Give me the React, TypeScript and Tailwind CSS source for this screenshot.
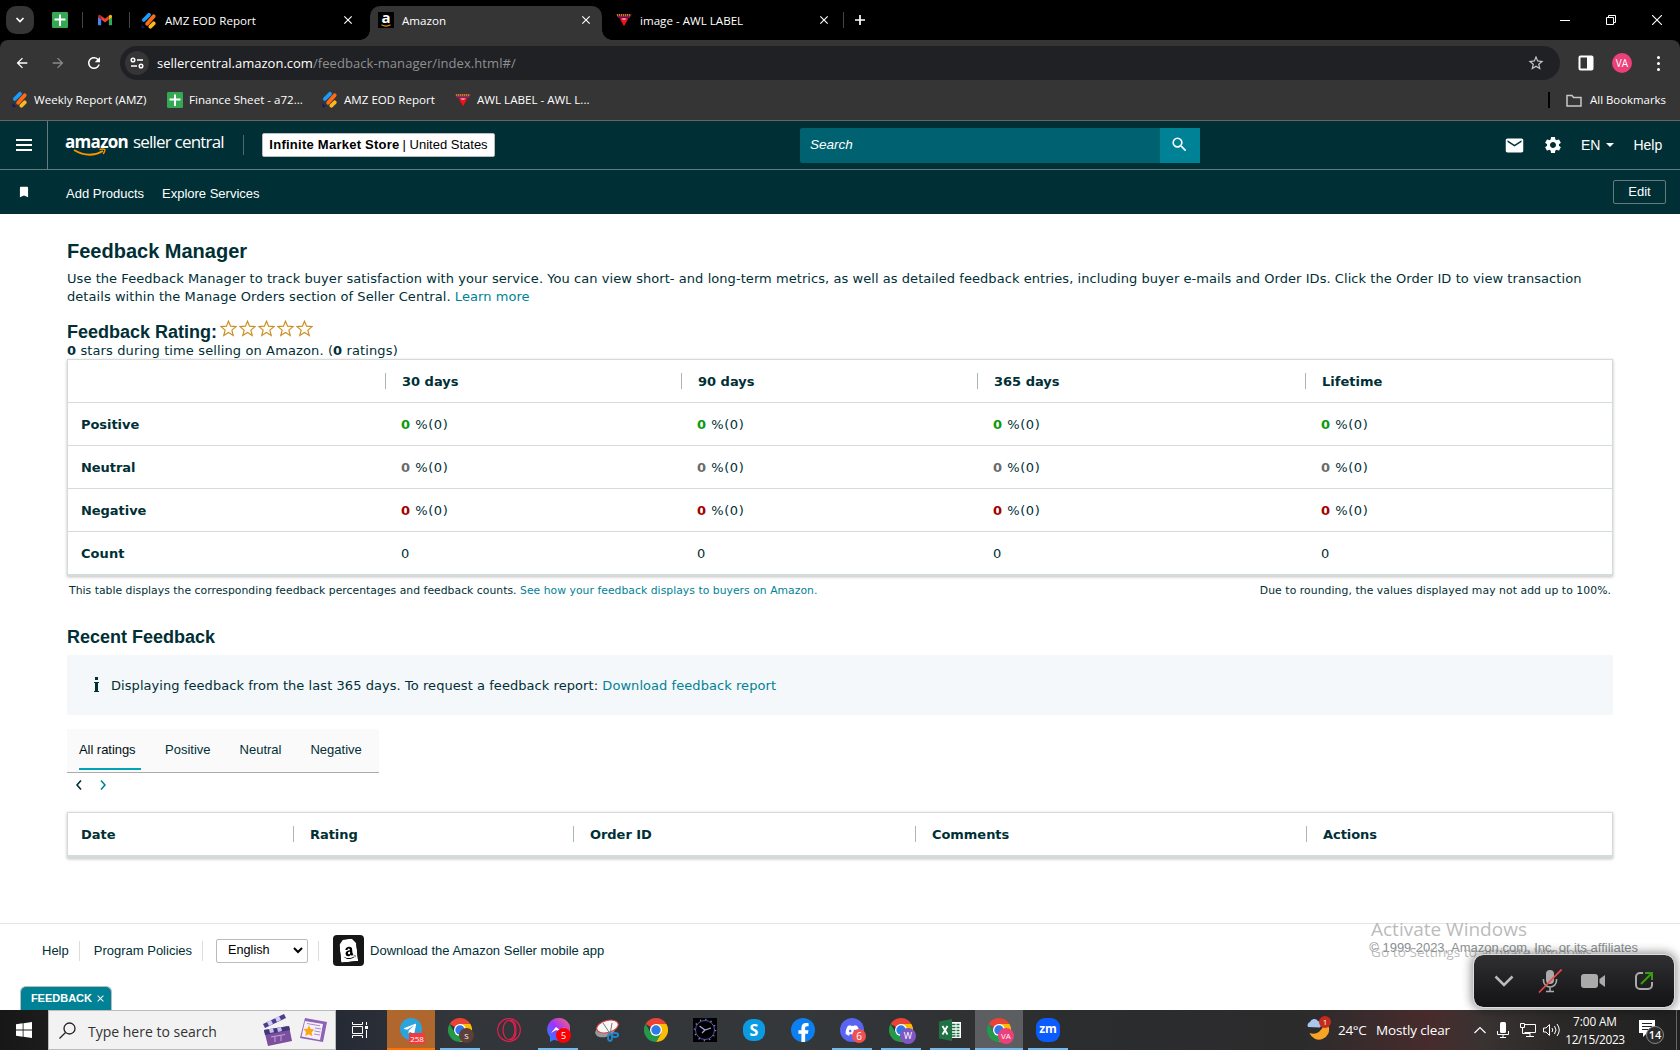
import React from 'react';
import { FaAmazon, FaDiscord, FaFacebookF, FaTelegramPlane } from 'react-icons/fa';
import {
  MdArrowBack,
  MdArrowForward,
  MdBookmark,
  MdClose,
  MdEmail,
  MdRefresh,
  MdSearch,
  MdSettings,
  MdStarBorder,
} from 'react-icons/md';

interface IconProps {
  className?: string;
}

const SheetsIcon: React.FC<IconProps> = ({ className }) => (
  <svg viewBox="0 0 16 16" className={className}>
    <rect width="16" height="16" rx="1.2" fill="#34a853" />
    <path d="M7 2.500h2v4h4.500v2H9v5.500H7V8.500H2.500v-2H7z" fill="#fff" />
  </svg>
);

const GmailIcon: React.FC<IconProps> = ({ className }) => (
  <svg viewBox="0 0 16 12" className={className}>
    <path d="M0 2v9a1 1 0 0 0 1 1h2.600V5z" fill="#4285f4" />
    <path d="M16 2v9a1 1 0 0 1-1 1h-2.600V5z" fill="#34a853" />
    <path d="M12.400 1.200V5.500L16 2.800V1.600A1.600 1.600 0 0 0 13.500.4z" fill="#fbbc04" />
    <path d="M3.600 5.500V1.200L8 4.500l4.400-3.300v4.300L8 8.800z" fill="#ea4335" />
    <path d="M0 1.600v1.200l3.600 2.700V1.200L2.500.4A1.600 1.600 0 0 0 0 1.600z" fill="#c5221f" />
  </svg>
);

const StripesIcon: React.FC<IconProps> = ({ className }) => (
  <svg viewBox="0 0 16 18" className={className}>
    <g strokeLinecap="round" strokeWidth="4">
      <path d="M2.500 8.500 8 3" stroke="#1a9cff" />
      <path d="M6 12.500 13 4.500" stroke="#ff6a13" />
      <path d="M9.500 15.500l3.500-3.500" stroke="#fdb81e" />
    </g>
    <path d="M0 13l4 4H0z" fill="#1b1464" />
  </svg>
);

const AwlIcon: React.FC<IconProps> = ({ className }) => (
  <svg viewBox="0 0 18 14" className={className}>
    <path d="M1 1.500h16" stroke="#d9722e" strokeWidth="2.500" strokeDasharray="1.500 .7" />
    <path d="M2 3.500h14" stroke="#b0216c" strokeWidth="1.500" />
    <path d="M4 5h10l-5 9z" fill="#f5101a" />
    <path d="M6 5h6l-2 2H8z" fill="#e9a1b8" />
  </svg>
);

const Star: React.FC<IconProps> = ({ className }) => (
  <svg viewBox="0 0 17 17" className={className}>
    <path
      d="M8.500 1.200l2.100 5 5.400.4-4.100 3.500 1.300 5.300-4.700-2.900-4.700 2.900 1.300-5.300L1 6.600l5.400-.4z"
      fill="#fffdf5"
      stroke="#c9902a"
      strokeWidth="1.200"
    />
  </svg>
);

const ChromeLogo: React.FC = () => (
  <svg viewBox="0 0 24 24" className="h-6 w-6">
    <path d="M12 12 1.600 6A12 12 0 0 1 22.400 6z" fill="#ea4335" />
    <path d="M12 12V6h10.400A12 12 0 0 1 12 24l5.200-9z" fill="#fbbc04" />
    <path d="M12 12l5.200 3L12 24A12 12 0 0 1 1.600 6l5.200 9z" fill="#229a48" />
    <circle cx="12" cy="12" r="6" fill="#fff" />
    <circle cx="12" cy="12" r="4.700" fill="#3079e8" />
  </svg>
);

const Bookmark: React.FC<{ icon: React.ReactNode; label: string; className: string }> = ({ icon, label, className }) => (
  <div className={`flex items-center gap-1.5 ${className}`}>
    {icon}
    <span className="whitespace-nowrap">{label}</span>
  </div>
);

const BrowserChrome: React.FC = () => (
  <div className="bg-black font-['Open_Sans',sans-serif] text-[11.600px] text-white">
    {/* Tab strip */}
    <div className="flex h-10 items-end">
      <div className="mb-1.5 ml-1.5 flex h-7 w-7 items-center justify-center rounded-[10px] bg-[#353535]">
        <svg viewBox="0 0 10 10" className="h-2.5 w-2.5">
          <path d="M1.500 3l3.500 3.500L8.500 3" fill="none" stroke="#fff" strokeWidth="1.700" />
        </svg>
      </div>
      <div className="ml-[18px] flex h-10 items-center">
        <SheetsIcon className="h-4 w-4" />
        <div className="ml-[14px] h-4 w-px bg-[#444]" />
        <GmailIcon className="ml-[15px] h-3 w-3.5" />
        <div className="ml-[17px] h-4 w-px bg-[#444]" />
        <StripesIcon className="ml-[11px] h-[17px] w-4" />
        <span className="mt-0.5 ml-2 w-[176px]">AMZ EOD Report</span>
        <MdClose className="h-[14px] w-[14px]" />
      </div>
      <div className="relative ml-[15px] flex h-[34px] w-[232px] items-center rounded-t-[10px] bg-[#353535]">
        <div className="absolute bottom-0 -left-2.5 h-2.5 w-2.5 bg-[radial-gradient(circle_at_0_0,black_9.500px,#353535_10px)]" />
        <div className="absolute -right-2.5 bottom-0 h-2.5 w-2.5 bg-[radial-gradient(circle_at_100%_0,black_9.500px,#353535_10px)]" />
        <div className="mb-1.5 ml-2 flex h-4 w-4 flex-col items-center bg-black">
          <span className="text-[15px] leading-[11px] font-bold">a</span>
          <svg viewBox="0 0 14 4" className="mt-px h-[3px] w-3.5">
            <path d="M1 1q6 3.500 12 0" fill="none" stroke="#f90" strokeWidth="1.500" />
          </svg>
        </div>
        <span className="mb-1 ml-2 w-[177px]">Amazon</span>
        <MdClose className="mb-1.5 h-[14px] w-[14px]" />
      </div>
      <div className="ml-[14px] flex h-10 items-center">
        <AwlIcon className="h-[14px] w-4" />
        <span className="mt-0.5 ml-2 w-[177px]">image - AWL LABEL</span>
        <MdClose className="h-[14px] w-[14px]" />
        <div className="ml-[12px] h-4 w-px bg-[#444]" />
        <svg viewBox="0 0 12 12" className="ml-2.5 h-3 w-3">
          <path d="M6 1v10M1 6h10" stroke="#fff" strokeWidth="1.700" />
        </svg>
      </div>
      <div className="mr-[18px] ml-auto flex h-10 items-center gap-9">
        <svg viewBox="0 0 10 10" className="h-2.5 w-2.5">
          <path d="M0 5.500h10" stroke="#fff" />
        </svg>
        <svg viewBox="0 0 10 10" className="h-2.5 w-2.5">
          <path d="M.5 2.500h7v7h-7zM2.500 2.500v-2h7v7h-2" fill="none" stroke="#fff" />
        </svg>
        <svg viewBox="0 0 10 10" className="h-2.5 w-2.5">
          <path d="M0 0l10 10M10 0L0 10" stroke="#fff" strokeWidth="1.100" />
        </svg>
      </div>
    </div>

    {/* Address bar */}
    <div className="flex h-[46px] items-center rounded-t-lg bg-[#353535]">
      <MdArrowBack className="ml-3.5 h-4 w-4" />
      <MdArrowForward className="ml-5 h-4 w-4 text-[#8a8a8a]" />
      <MdRefresh className="ml-[19px] h-[18px] w-[18px]" />
      <div className="ml-[17px] flex h-[34px] w-[1440px] items-center rounded-full bg-[#202124]">
        <div className="ml-[5px] flex h-6 w-6 items-center justify-center rounded-full bg-[#353535]">
          <svg viewBox="0 0 14 12" className="h-3 w-3.5" fill="none" stroke="#fff" strokeWidth="1.500">
            <circle cx="3" cy="3" r="1.800" />
            <path d="M7 3h6M1 9h6" />
            <circle cx="11" cy="9" r="1.800" />
          </svg>
        </div>
        <span className="mt-0.5 ml-2 text-[13px] tracking-[0.07px] whitespace-nowrap text-[#8e9092]">
          <span className="tracking-normal text-white">sellercentral.amazon.com</span>/feedback-manager/index.html#/
        </span>
        <MdStarBorder className="mr-[15px] ml-auto h-[18px] w-[18px] text-[#c7c7c7]" />
      </div>
      <svg viewBox="0 0 16 16" className="ml-[18px] h-4 w-4">
        <rect x="1.500" y="1.500" width="13" height="13" rx="1" fill="none" stroke="#fff" strokeWidth="2" />
        <path d="M9 1h6v14H9z" fill="#fff" />
      </svg>
      <div className="ml-[18px] flex h-5 w-5 items-center justify-center rounded-full bg-[#ec407a] text-[10px]">VA</div>
      <div className="ml-[25px] flex flex-col gap-[3px]">
        <div className="h-[3px] w-[3px] rounded-full bg-white" />
        <div className="h-[3px] w-[3px] rounded-full bg-white" />
        <div className="h-[3px] w-[3px] rounded-full bg-white" />
      </div>
    </div>

    {/* Bookmarks bar */}
    <div className="flex h-[35px] border-b border-[#666] bg-[#353535] pl-3">
      <div className="flex h-7 items-center">
        <Bookmark icon={<StripesIcon className="h-[17px] w-4" />} label="Weekly Report (AMZ)" className="w-[155px]" />
        <Bookmark icon={<SheetsIcon className="h-4 w-4" />} label="Finance Sheet - a72..." className="w-[155px]" />
        <Bookmark icon={<StripesIcon className="h-[17px] w-4" />} label="AMZ EOD Report" className="w-[133px]" />
        <Bookmark icon={<AwlIcon className="h-[14px] w-4" />} label="AWL LABEL - AWL L..." className="" />
      </div>
      <div className="mr-[14px] ml-auto flex h-7 items-center">
        <div className="h-4 w-0.5 bg-black" />
        <svg viewBox="0 0 16 13" className="ml-4 h-[13px] w-4">
          <path d="M1 11.500V1.500h5l1.500 2H15v8.500H1z" fill="none" stroke="#c7c7c7" strokeWidth="1.500" />
        </svg>
        <span className="ml-2 text-[11.400px]">All Bookmarks</span>
      </div>
    </div>
  </div>
);

const SellerHeader: React.FC = () => (
  <header className="bg-[#002f36] text-white">
    <div className="flex h-[49px] items-center border-b border-[#667b7e]">
      <div className="flex h-full w-12 flex-col items-start justify-center gap-[3px] border-r border-[#667b7e] pl-4">
        <div className="h-0.5 w-4 bg-white" />
        <div className="h-0.5 w-4 bg-white" />
        <div className="h-0.5 w-4 bg-white" />
      </div>
      <div className="relative ml-[17px] flex w-[161px] gap-[5px] pb-1.5 font-['Open_Sans',sans-serif] text-[17px] leading-5 whitespace-nowrap">
        <span className="font-bold tracking-[-0.7px]">amazon</span>
        <span className="tracking-[-0.8px]">seller central</span>
        <svg viewBox="0 0 34 9" className="absolute top-[16px] left-[8px] h-[9px] w-[34px]">
          <path d="M1 2q15 9 29 1" fill="none" stroke="#f79400" strokeWidth="2" />
          <path d="M26.500 1.500q4-1 5.500 0 0 2-1.800 4.500" fill="none" stroke="#f79400" strokeWidth="1.300" />
        </svg>
      </div>
      <div className="ml-[17px] h-5 w-px bg-[#50696d]" />
      <div className="ml-[18px] flex h-6 w-[233px] items-center justify-center rounded-[2px] border border-[#bbb] bg-white text-[13px] whitespace-nowrap text-black">
        <b className="mr-[3px] tracking-[0.25px]">Infinite Market Store</b>| United States
      </div>
      <div className="ml-[305px] flex h-[35px] w-[400px]">
        <div className="flex w-[360px] items-center rounded-l-[2px] bg-[#006170] pl-2.5 text-[13.500px] italic">Search</div>
        <div className="flex w-10 items-center justify-center bg-[#008296] pr-px pb-px">
          <MdSearch className="h-[19px] w-[19px]" />
        </div>
      </div>
      <MdEmail className="ml-[304px] h-[21px] w-[21px]" />
      <MdSettings className="ml-[18px] h-5 w-5" />
      <span className="ml-[18px] text-sm">EN</span>
      <div className="ml-[6px] border-x-4 border-t-4 border-x-transparent border-t-white" />
      <span className="ml-[19px] text-sm">Help</span>
    </div>
    <div className="flex h-[44px] items-center text-[13px]">
      <MdBookmark className="ml-[17px] h-[14px] w-[14px]" />
      <span className="mt-[3px] ml-[35px] w-24">Add Products</span>
      <span className="mt-[3px]">Explore Services</span>
      <div className="mr-[14px] mb-px ml-auto flex h-6 w-[53px] items-center justify-center rounded-[2px] border border-[#667b7e]">Edit</div>
    </div>
  </header>
);

const PERIODS = ['30 days', '90 days', '365 days', 'Lifetime'];

const RATING_ROWS = [
  { label: 'Positive', color: 'text-[#0a9a0a]' },
  { label: 'Neutral', color: 'text-[#6b6b6b]' },
  { label: 'Negative', color: 'text-[#a50000]' },
];

const GRID = 'grid grid-cols-[317px_296px_296px_328px_1fr] items-center';

const RatingTable: React.FC = () => (
  <div className="h-[217px] border border-b-2 border-[#d5dbdb] text-[13px] shadow-[0_1px_3px_rgba(0,0,0,0.25)]">
    <div className={`${GRID} h-[43px] border-b border-[#d5dbdb] font-bold`}>
      <span />
      {PERIODS.map((period) => (
        <div key={period} className="flex items-center">
          <div className="h-4 w-px bg-[#aab7b8]" />
          <span className="mt-0.5 ml-4 tracking-normal">{period}</span>
        </div>
      ))}
    </div>
    {RATING_ROWS.map((row) => (
      <div key={row.label} className={`${GRID} h-[43px] border-b border-[#d5dbdb] pt-0.5`}>
        <b className="pl-[13px] tracking-[-0.05px]">{row.label}</b>
        {PERIODS.map((period) => (
          <span key={period} className="pl-4 tracking-[0.55px]">
            <b className={row.color}>0</b> %(0)
          </span>
        ))}
      </div>
    ))}
    <div className={`${GRID} h-[42px] pt-0.5`}>
      <b className="pl-[13px]">Count</b>
      {PERIODS.map((period) => (
        <span key={period} className="pl-4">0</span>
      ))}
    </div>
  </div>
);

const FeedbackPage: React.FC = () => (
  <main className="mx-[67px] h-[709px] pt-6 font-['DejaVu_Sans',sans-serif] text-[13px] tracking-[0.06px] text-[#002f36]">
    <h1 className="h-[32px] font-['Liberation_Sans',sans-serif] text-[20px] leading-[26px] font-bold tracking-normal">Feedback Manager</h1>
    <p className="h-[49px] leading-[18px] whitespace-nowrap">
      Use the Feedback Manager to track buyer satisfaction with your service. You can view short- and long-term metrics, as well as detailed feedback entries, including buyer e-mails and Order IDs. Click the Order ID to view transaction
      <br />
      details within the Manage Orders section of Seller Central. <span className="text-[#008296]">Learn more</span>
    </p>
    <div className="flex h-[23px] items-center font-['Liberation_Sans',sans-serif] text-[18px] font-bold tracking-normal whitespace-nowrap">
      <span className="mt-1 w-[153px]">Feedback Rating:</span>
      <div className="mb-1 flex gap-0.5">
        {[1, 2, 3, 4, 5].map((n) => (
          <Star key={n} className="h-[17px] w-[17px]" />
        ))}
      </div>
    </div>
    <p className="h-[17px] leading-[17px] tracking-[0.12px]">
      <b>0</b> stars during time selling on Amazon. (<b>0</b> ratings)
    </p>
    <RatingTable />
    <div className="flex h-[49px] justify-between px-0.5 pt-[7px] text-[10.800px] tracking-[0.03px]">
      <span>
        This table displays the corresponding feedback percentages and feedback counts.{' '}
        <span className="text-[#008296]">See how your feedback displays to buyers on Amazon.</span>
      </span>
      <span className="tracking-[0.07px]">Due to rounding, the values displayed may not add up to 100%.</span>
    </div>
    <h2 className="h-[30px] font-['Liberation_Sans',sans-serif] text-[18px] leading-6 font-bold tracking-normal">Recent Feedback</h2>
    <div className="flex h-[60px] items-center bg-[#f4f8fa] pl-[27px]">
      <div className="mr-3 mb-0.5 flex w-[5px] flex-col items-center gap-[2px]">
        <div className="h-[3px] w-[3px] bg-[#002f36]" />
        <div className="flex h-[10px] w-[5px] flex-col items-center border-y border-[#002f36]">
          <div className="h-full w-[3px] bg-[#002f36]" />
        </div>
      </div>
      <span className="mt-px">
        Displaying feedback from the last 365 days. To request a feedback report: <span className="text-[#008296]">Download feedback report</span>
      </span>
    </div>
    <div className="mt-[14px] flex h-11 w-[312px] border-b border-[#aaa] bg-[#fafafa] pl-3 font-['Liberation_Sans',sans-serif] text-[13px] leading-[41px] tracking-normal">
      <span className="h-[41px] w-[62px] border-b-2 border-[#00a4b4] tracking-[-0.05px] text-[#000f13]">All ratings</span>
      <span className="ml-6">Positive</span>
      <span className="ml-[29px]">Neutral</span>
      <span className="ml-[29px]">Negative</span>
    </div>
    <div className="flex h-[39px] gap-[18px] pt-[7px] pl-[9px]">
      <svg viewBox="0 0 6 10" className="h-2.5 w-1.5">
        <path d="M5 .5L1 5l4 4.500" fill="none" stroke="#002f36" strokeWidth="1.600" />
      </svg>
      <svg viewBox="0 0 6 10" className="h-2.5 w-1.5">
        <path d="M1 .5L5 5 1 9.500" fill="none" stroke="#008296" strokeWidth="1.600" />
      </svg>
    </div>
    <div className="grid h-[46px] grid-cols-[225px_280px_342px_391px_1fr] items-center border border-b-[3px] border-[#d5dbdb] text-[13px] font-bold tracking-[-0.05px] shadow-[0_1px_3px_rgba(0,0,0,0.25)]">
      <span className="mt-px pl-[13px]">Date</span>
      {['Rating', 'Order ID', 'Comments', 'Actions'].map((title) => (
        <div key={title} className="flex items-center">
          <div className="h-4 w-px bg-[#aab7b8]" />
          <span className="mt-px ml-4">{title}</span>
        </div>
      ))}
    </div>
  </main>
);

const Footer: React.FC = () => (
  <footer className="h-[87px] border-t border-[#e3e6e6] text-[13px] text-[#002f36]">
    <div className="flex h-[53px] items-center pl-[42px]">
      <span>Help</span>
      <div className="ml-2.5 h-5 w-px bg-[#ddd]" />
      <span className="ml-3.5">Program Policies</span>
      <div className="ml-[10px] h-5 w-px bg-[#ddd]" />
      <div className="ml-[13px] flex h-6 w-[92px] items-center justify-between rounded-[2px] border border-[#bbb] pr-1 pl-[11px] text-[12.700px] text-black">
        English
        <svg viewBox="0 0 10 7" className="h-[7px] w-2.5">
          <path d="M1 1l4 4 4-4" fill="none" stroke="#000" strokeWidth="2" />
        </svg>
      </div>
      <div className="ml-[10px] h-5 w-px bg-[#ddd]" />
      <div className="ml-[14px] flex h-[31px] w-[31px] items-center justify-center rounded bg-[#161616]">
        <div className="flex h-[23px] w-[17px] -rotate-6 items-end justify-center bg-white [clip-path:polygon(25%_0,75%_0,100%_22%,100%_100%,0_100%,0_22%)]">
          <FaAmazon className="mb-0.5 h-[14px] w-[14px] text-black" />
        </div>
      </div>
      <span className="ml-1.5">Download the Amazon Seller mobile app</span>
      <span className="mr-[42px] mb-1.5 ml-auto text-[#8a8f90]">© 1999-2023, Amazon.com, Inc. or its affiliates</span>
    </div>
    <div className="mt-[9px] ml-5 flex h-6 w-[92px] items-center justify-end gap-[3px] rounded-t-md border border-b-0 border-[#bbb] bg-[#008296] pr-[5px] text-[11px] font-bold text-white">
      FEEDBACK <MdClose className="h-[11px] w-[11px]" />
    </div>
  </footer>
);

const MeetingPanel: React.FC = () => (
  <div className="absolute top-[955px] left-[1474px] flex h-[52px] w-[200px] items-center rounded-[9px] bg-linear-to-b from-[#303032] to-[#131315] shadow-[0_0_10px_3px_rgba(0,0,0,0.4)] outline outline-[#ddd]">
    <svg viewBox="0 0 20 12" className="ml-5 h-3 w-5">
      <path d="M1.500 1.500L10 10l8.500-8.500" fill="none" stroke="#bbb" strokeWidth="2.500" />
    </svg>
    <svg viewBox="0 0 24 24" className="ml-6 h-6 w-6" fill="none">
      <rect x="8" y="1" width="8" height="14" rx="4" fill="#aaa" />
      <path d="M5.500 10v1.500a6.500 6.500 0 0 0 13 0V10M12 18v4M8 22.500h8" stroke="#aaa" strokeWidth="1.600" />
      <path d="M1 23.500L23.500.5" stroke="#f04848" strokeWidth="1.600" />
    </svg>
    <svg viewBox="0 0 24 14" className="ml-[19px] h-3.5 w-6" fill="#aaa">
      <rect width="17" height="14" rx="3" />
      <path d="M18.500 5L24 1v12l-5.500-4z" />
    </svg>
    <svg viewBox="0 0 20 20" className="ml-[29px] h-5 w-5" fill="none" strokeWidth="2">
      <path d="M9 2H6a4 4 0 0 0-4 4v8a4 4 0 0 0 4 4h8a4 4 0 0 0 4-4v-3" stroke="#aaa" />
      <path d="M7 13L18 2M11 2h7v7" stroke="#3a9a10" />
    </svg>
  </div>
);

interface TaskbarAppProps {
  children: React.ReactNode;
  open?: boolean;
  badge?: string;
  badgeClass?: string;
  className?: string;
}

const TaskbarApp: React.FC<TaskbarAppProps> = ({ children, open, badge, badgeClass, className }) => (
  <div className={`relative mr-px flex h-10 w-12 items-center justify-center ${className ?? ''}`}>
    {children}
    {badge && (
      <span className={`absolute flex items-center justify-center ${badgeClass ?? ''}`}>{badge}</span>
    )}
    {open && <div className="absolute bottom-0 h-0.5 w-10 bg-[#76b9ed]" />}
  </div>
);

const Taskbar: React.FC = () => (
  <div className="flex h-10 bg-[linear-gradient(90deg,#171717_0,#1c1c1d_48px,#262a35_340px,#323539_450px,#34383a_800px,#2c2d2f_1060px,#2b2b2c_1300px,#482b2c_1430px,#393332_1480px,#2b2928_1560px,#202020_1680px)] font-['Open_Sans',sans-serif] text-white">
    <div className="flex w-12 items-center justify-center">
      <svg viewBox="0 0 16 16" className="h-4 w-4" fill="#fff">
        <path d="M0 2.200l6.700-.9v6.300H0zM7.500 1.200L16 0v7.600H7.500zM0 8.400h6.700v6.300L0 13.800zM7.500 8.400H16V16l-8.500-1.200z" />
      </svg>
    </div>
    <div className="flex h-10 w-72 items-center border border-[#bcbcbc] bg-[#f2f2f2] text-[#333]">
      <svg viewBox="0 0 17 17" className="ml-[10px] h-[17px] w-[17px]" fill="none" stroke="#222" strokeWidth="1.300">
        <circle cx="10.500" cy="6.500" r="5.500" />
        <path d="M6.500 10.500L.5 16.500" />
      </svg>
      <span className="mt-0.5 ml-3 w-[175px] text-[14px]">Type here to search</span>
      {/* Clapperboard */}
      <svg viewBox="0 0 30 32" className="h-8 w-[30px]">
        <path d="M0 10L21 0l2 4L2 14z" fill="#4a3f8c" />
        <path d="M4 8l4-2 2 4-4 2zM12 4l4-2 2 4-4 2z" fill="#d9c9f5" />
        <path d="M1 16l25-4 3 15-24 5z" fill="#7d4f9f" />
        <path d="M1 16l25-4 1 4-25 5z" fill="#3d3a78" />
        <path d="M6 15l4-.7 1 4-4 .8zM14 13.800l4-.7 1 4-4 .8z" fill="#cdbcf0" />
        <path d="M8 23l14-2.500M12 23v5M18 22v5" stroke="#c7a7df" />
      </svg>
      {/* News card */}
      <svg viewBox="0 0 28 25" className="ml-[7px] h-[25px] w-7">
        <path d="M5 0l22 4-4 20L0 20z" fill="#8e63b5" />
        <path d="M5 3l18 3-3 16L1.500 18.500z" fill="#f5effb" />
        <path d="M15 10l6 1M14.500 13l6 1M14 16l6 1M7 5.500l13 2.300" stroke="#a88bc5" />
        <path d="M9 7.500l1.600 3.500 3.900.5-2.900 2.800.8 4-3.600-2-3.600 1.600.8-3.900-2.500-3 3.900-.3z" fill="#fca510" />
      </svg>
    </div>
    <div className="flex w-[51px] items-center justify-center pr-[3px]">
      <svg viewBox="0 0 16 16" className="h-4 w-4" fill="none" stroke="#fff">
        <path d="M.5 0v2.500h10V0M.5 4.500h10v7H.5zM.5 16v-2.500h10V16M14.500 0v3M14.500 8v8" />
        <path d="M13 4h3v3h-3z" fill="#fff" stroke="none" />
      </svg>
    </div>
    <TaskbarApp className="border-b-2 border-[#ff7200] bg-[#b0672e]" badge="258" badgeClass="top-[23px] left-[22px] h-[11px] w-4 bg-[#f03c3c] text-[8px]">
      <div className="flex h-[22px] w-[22px] items-center justify-center rounded-full bg-[#2ba3dc]">
        <FaTelegramPlane className="mr-0.5 h-[14px] w-[14px]" />
      </div>
    </TaskbarApp>
    <TaskbarApp open badge="S" badgeClass="top-[18px] left-[23px] h-[15px] w-[15px] rounded-full bg-[#5d4037] text-[8px]">
      <ChromeLogo />
    </TaskbarApp>
    <TaskbarApp>
      <svg viewBox="0 0 24 24" className="h-6 w-6" fill="none" stroke="#e0204e" strokeWidth="1.200">
        <circle cx="12" cy="12" r="11.300" />
        <ellipse cx="12" cy="12" rx="6" ry="9.500" />
        <path d="M12 2.500q7-1 7 9.500t-7 9.500" />
      </svg>
    </TaskbarApp>
    <TaskbarApp open badge="5" badgeClass="top-[18px] left-[22px] h-[15px] w-[15px] rounded-full bg-[#f00] text-[9px]">
      <svg viewBox="0 0 24 24" className="h-6 w-6">
        <defs>
          <linearGradient id="msg" x1="0" y1="1" x2="1" y2="0">
            <stop offset="0" stopColor="#0695ff" />
            <stop offset=".5" stopColor="#a033ff" />
            <stop offset="1" stopColor="#ff6968" />
          </linearGradient>
        </defs>
        <path d="M12 0a11.500 11.500 0 0 0-8 19v5l4-2.200A11.500 11.500 0 1 0 12 0z" fill="url(#msg)" />
        <path d="M5 15l5-6 4 3 5-3-5 5-4-2z" fill="#fff" />
      </svg>
    </TaskbarApp>
    <TaskbarApp>
      <svg viewBox="0 0 24 24" className="h-6 w-6">
        <ellipse cx="10" cy="13" rx="10" ry="6" fill="#999" transform="rotate(-15 10 13)" />
        <ellipse cx="12.500" cy="8.500" rx="11" ry="6" fill="#f8f8f8" stroke="#e04040" transform="rotate(-15 12.500 8.500)" />
        <path d="M8 5l8 12M17 5l-2 12" stroke="#777" />
        <g fill="none" stroke="#2387c9" strokeWidth="1.800">
          <ellipse cx="15" cy="19.500" rx="2" ry="3.500" />
          <ellipse cx="20" cy="17" rx="3.200" ry="2" />
        </g>
      </svg>
    </TaskbarApp>
    <TaskbarApp>
      <ChromeLogo />
    </TaskbarApp>
    <TaskbarApp>
      <svg viewBox="0 0 24 24" className="h-6 w-6">
        <rect width="24" height="24" />
        <circle cx="12" cy="12" r="9.500" fill="none" stroke="#5a55a8" />
        <circle cx="12" cy="12" r="10.500" fill="none" stroke="#8a85d0" strokeWidth="1.500" strokeDasharray="1.200 4.300" />
        <path d="M6.500 8l5.500 4 6-2M12 12l-3 3" fill="none" stroke="#aaa6e8" strokeWidth="1.200" />
      </svg>
    </TaskbarApp>
    <TaskbarApp>
      <div className="flex h-[22px] w-[22px] items-center justify-center rounded-[9px] bg-[#0a9be3] text-[16px] font-bold">S</div>
    </TaskbarApp>
    <TaskbarApp>
      <div className="flex h-6 w-6 items-end justify-center rounded-full bg-[#0c80f0]">
        <FaFacebookF className="h-[19px] w-[19px]" />
      </div>
    </TaskbarApp>
    <TaskbarApp open badge="6" badgeClass="top-[19px] left-[24px] h-3.5 w-3.5 rounded-full bg-[#f05050] text-[10px]">
      <div className="flex h-6 w-6 items-center justify-center rounded-full bg-[#5865f2]">
        <FaDiscord className="h-[15px] w-[15px]" />
      </div>
    </TaskbarApp>
    <TaskbarApp open badge="W" badgeClass="top-[18px] left-[23px] h-4 w-4 rounded-full bg-[#7e57c2] text-[9px]">
      <ChromeLogo />
    </TaskbarApp>
    <TaskbarApp open>
      <svg viewBox="0 0 22 22" className="h-[22px] w-[22px]">
        <rect x="11" y="3" width="11" height="16" fill="#fff" />
        <path d="M13 5.500h7.500M13 8.500h7.500M13 11.500h7.500M13 14.500h7.500M13 17h7.500" stroke="#1f7244" strokeWidth="1.300" />
        <path d="M17 4v14" stroke="#fff" />
        <path d="M0 2.500L13 0v22L0 19.500z" fill="#1f7244" />
        <path d="M3.500 7l5 8.500M8.500 7l-5 8.500" stroke="#fff" strokeWidth="1.800" />
      </svg>
    </TaskbarApp>
    <TaskbarApp className="bg-[#5c5e61]" badge="VA" badgeClass="top-[18px] left-[23px] h-4 w-4 rounded-full bg-[#ec407a] text-[8px]">
      <ChromeLogo />
      <div className="absolute bottom-0 h-0.5 w-12 bg-[#76b9ed]" />
    </TaskbarApp>
    <TaskbarApp open>
      <div className="flex h-6 w-6 items-center justify-center rounded-[9px] bg-[#0b5cff] pb-0.5 text-[12px] font-bold">zm</div>
    </TaskbarApp>

    {/* Tray */}
    <div className="ml-auto flex items-center">
      <div className="relative mb-0.5 h-6 w-6">
        <svg viewBox="0 0 24 24" className="h-6 w-6">
          <path d="M21.500 9a10 10 0 1 1-19 7q9 3 14-7z" fill="#f7a325" />
          <path d="M1 10a3.500 3.500 0 0 1 2-5 4.500 4.500 0 0 1 8-1 4 4 0 0 1 2 6.500z" fill="#a9c6ee" />
        </svg>
        <span className="absolute -top-px left-[12px] flex h-3 w-3 items-center justify-center rounded-full bg-[#c42b1c] text-[8px]">1</span>
      </div>
      <span className="ml-[7px] w-[38px] text-[13.500px] tracking-[-0.3px]">24°C</span>
      <span className="w-[98px] text-[13.500px] tracking-[-0.15px] whitespace-nowrap">Mostly clear</span>
      <svg viewBox="0 0 12 8" className="h-2 w-3">
        <path d="M.5 7L6 1.500 11.500 7" fill="none" stroke="#fff" strokeWidth="1.200" />
      </svg>
      <svg viewBox="0 0 12 16" className="ml-[11px] h-4 w-3" fill="none" stroke="#fff">
        <rect x="3" y="0" width="6" height="11" rx="1.500" fill="#fff" stroke="none" />
        <path d="M.5 9v3.500h11V9M6 12.500V16M3 15.500h6" />
      </svg>
      <svg viewBox="0 0 16 14" className="ml-[11px] h-3.5 w-4" fill="none" stroke="#fff">
        <path d="M4.500 1.500h11v8h-11M.5.5h4v4h-4zM2.500 4.500v6H10M10 10v3M6 13.500h8" />
      </svg>
      <svg viewBox="0 0 17 14" className="ml-[7px] h-3.5 w-[17px]" fill="none" stroke="#fff">
        <path d="M.5 5H3l3.500-3.500v11L3 9H.5zM9 5q1.500 2 0 4M11.500 3q3 4 0 8M14 1q4.500 6 0 12" />
      </svg>
      <div className="mb-px ml-[5px] w-[60px] text-center text-[11.800px] leading-[18px] tracking-[-0.3px]">
        <div className="tracking-[-0.1px]">7:00 AM</div>
        <div>12/15/2023</div>
      </div>
      <div className="relative ml-[14px] h-[26px] w-[26px]">
        <svg viewBox="0 0 26 26" className="h-[26px] w-[26px]">
          <path d="M0 3h16v13H8l-4 4v-4H0z" fill="#fff" />
          <path d="M3 6.500h10M3 9.500h10M3 12.500h6" stroke="#222" />
        </svg>
        <span className="absolute top-[9px] left-[7px] flex h-[18px] w-[18px] items-center justify-center rounded-full border border-[#888] bg-[#2b2b2b] text-[11px] font-semibold">14</span>
      </div>
      <div className="mr-[3px] ml-[11px] h-10 w-px bg-[#666]" />
    </div>
  </div>
);

const App: React.FC = () => (
  <div className="relative h-[1050px] w-[1680px] overflow-hidden bg-white font-['Liberation_Sans',sans-serif]">
    <BrowserChrome />
    <SellerHeader />
    <FeedbackPage />
    <Footer />
    <Taskbar />
    <div className="absolute top-[914px] left-[1371px] font-['Open_Sans',sans-serif] whitespace-nowrap text-[#a9a9a9]/80">
      <div className="text-[19px] leading-[30px]">Activate Windows</div>
      <div className="text-[13.500px] leading-4 tracking-[0.1px]">Go to Settings to activate Windows.</div>
    </div>
    <MeetingPanel />
  </div>
);

export default App;
